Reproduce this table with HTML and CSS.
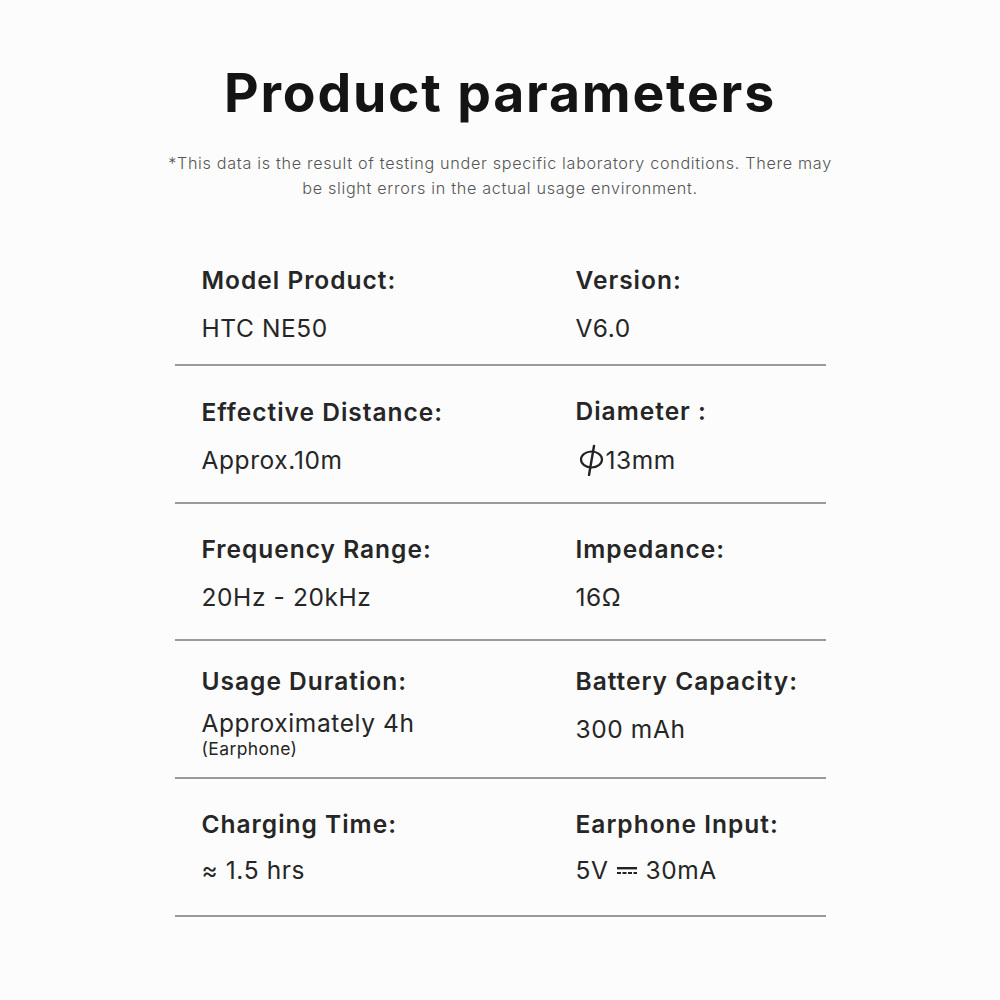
FILE: index.html
```html
<!DOCTYPE html>
<html lang="en">
<head>
<meta charset="utf-8">
<title>Product parameters</title>
<link rel="stylesheet" href="styles.css">
</head>
<body>
<main class="page">
  <h1 class="title">Product parameters</h1>
  <p class="note">*This data is the result of testing under specific laboratory conditions. There may<br>be slight errors in the actual usage environment.</p>
  <section class="table">
    <div class="row row-first">
      <div class="cell"><div class="label">Model Product:</div><div class="value">HTC NE50</div></div>
      <div class="cell"><div class="label">Version:</div><div class="value">V6.0</div></div>
    </div>
    <div class="row">
      <div class="cell"><div class="label">Effective Distance:</div><div class="value">Approx.10m</div></div>
      <div class="cell"><div class="label">Diameter :</div><div class="value"><svg class="phi" width="27" height="32" viewBox="0 0 27 32" aria-label="ϕ"><ellipse cx="13.5" cy="15.5" rx="10.5" ry="8" fill="none" stroke="#222" stroke-width="2.2"/><line x1="16" y1="2" x2="11" y2="31" stroke="#222" stroke-width="2.4" stroke-linecap="round"/></svg>13mm</div></div>
    </div>
    <div class="row">
      <div class="cell"><div class="label">Frequency Range:</div><div class="value">20Hz - 20kHz</div></div>
      <div class="cell"><div class="label">Impedance:</div><div class="value">16Ω</div></div>
    </div>
    <div class="row row-tall">
      <div class="cell"><div class="label">Usage Duration:</div><div class="value tight">Approximately 4h</div><div class="sub">(Earphone)</div></div>
      <div class="cell"><div class="label">Battery Capacity:</div><div class="value">300 mAh</div></div>
    </div>
    <div class="row row-last">
      <div class="cell"><div class="label">Charging Time:</div><div class="value">≈ 1.5 hrs</div></div>
      <div class="cell"><div class="label">Earphone Input:</div><div class="value">5V<svg class="dc" width="22" height="10" viewBox="0 0 22 10"><rect x="1" y="1" width="20" height="2.4" fill="#222"/><rect x="1" y="6" width="4" height="2" fill="#222"/><rect x="6.5" y="6" width="4" height="2" fill="#222"/><rect x="12" y="6" width="4" height="2" fill="#222"/><rect x="17.5" y="6" width="3.5" height="2" fill="#222"/></svg>30mA</div></div>
    </div>
  </section>
</main>
</body>
</html>
```
FILE: styles.css
```css
html, body {
  margin: 0;
  padding: 0;
  background: #fcfcfc;
}
body {
  font-family: "Inter", "Open Sans", sans-serif;
  color: #222;
}
.page {
  width: 1000px;
  height: 1000px;
  display: flex;
  flex-direction: column;
  align-items: center;
  padding-top: 58px;
  box-sizing: border-box;
}
.title {
  margin: 0;
  font-size: 53.5px;
  font-weight: 700;
  color: #141414;
  line-height: 70px;
  letter-spacing: 1.8px;
}
.note {
  margin: 23px 0 0;
  font-size: 16.2px;
  font-weight: 300;
  line-height: 25px;
  color: #555;
  text-align: center;
  letter-spacing: 0.68px;
}
.table {
  margin-top: 27px;
  width: 651px;
  display: flex;
  flex-direction: column;
}
.row {
  height: 137.75px;
  box-sizing: border-box;
  border-bottom: 2px solid #9a9a9a;
  display: grid;
  grid-template-columns: 374px 1fr;
  align-items: center;
  padding-left: 27px;
  padding-top: 4px;
}
.row-first {
  padding-top: 16px;
}
.row-last {
  padding-top: 0;
}
.row-tall {
  align-items: start;
  padding-top: 25px;
}
.cell {
  display: flex;
  flex-direction: column;
}
.label {
  font-size: 24.5px;
  font-weight: 600;
  color: #262626;
  line-height: 30px;
  letter-spacing: 1px;
}
.value {
  margin-top: 18px;
  font-size: 24.5px;
  font-weight: 400;
  color: #262626;
  line-height: 30px;
  letter-spacing: 0.6px;
  display: flex;
  align-items: center;
}
.row-last .value {
  margin-top: 16px;
}
.value.tight {
  margin-top: 12px;
}
.sub {
  font-size: 17.5px;
  font-weight: 400;
  line-height: 22px;
  color: #262626;
  letter-spacing: 0.4px;
}
.phi {
  margin: 0 1px 0 2px;
}
.dc {
  margin: 2px 8px 0 7px;
}
```
